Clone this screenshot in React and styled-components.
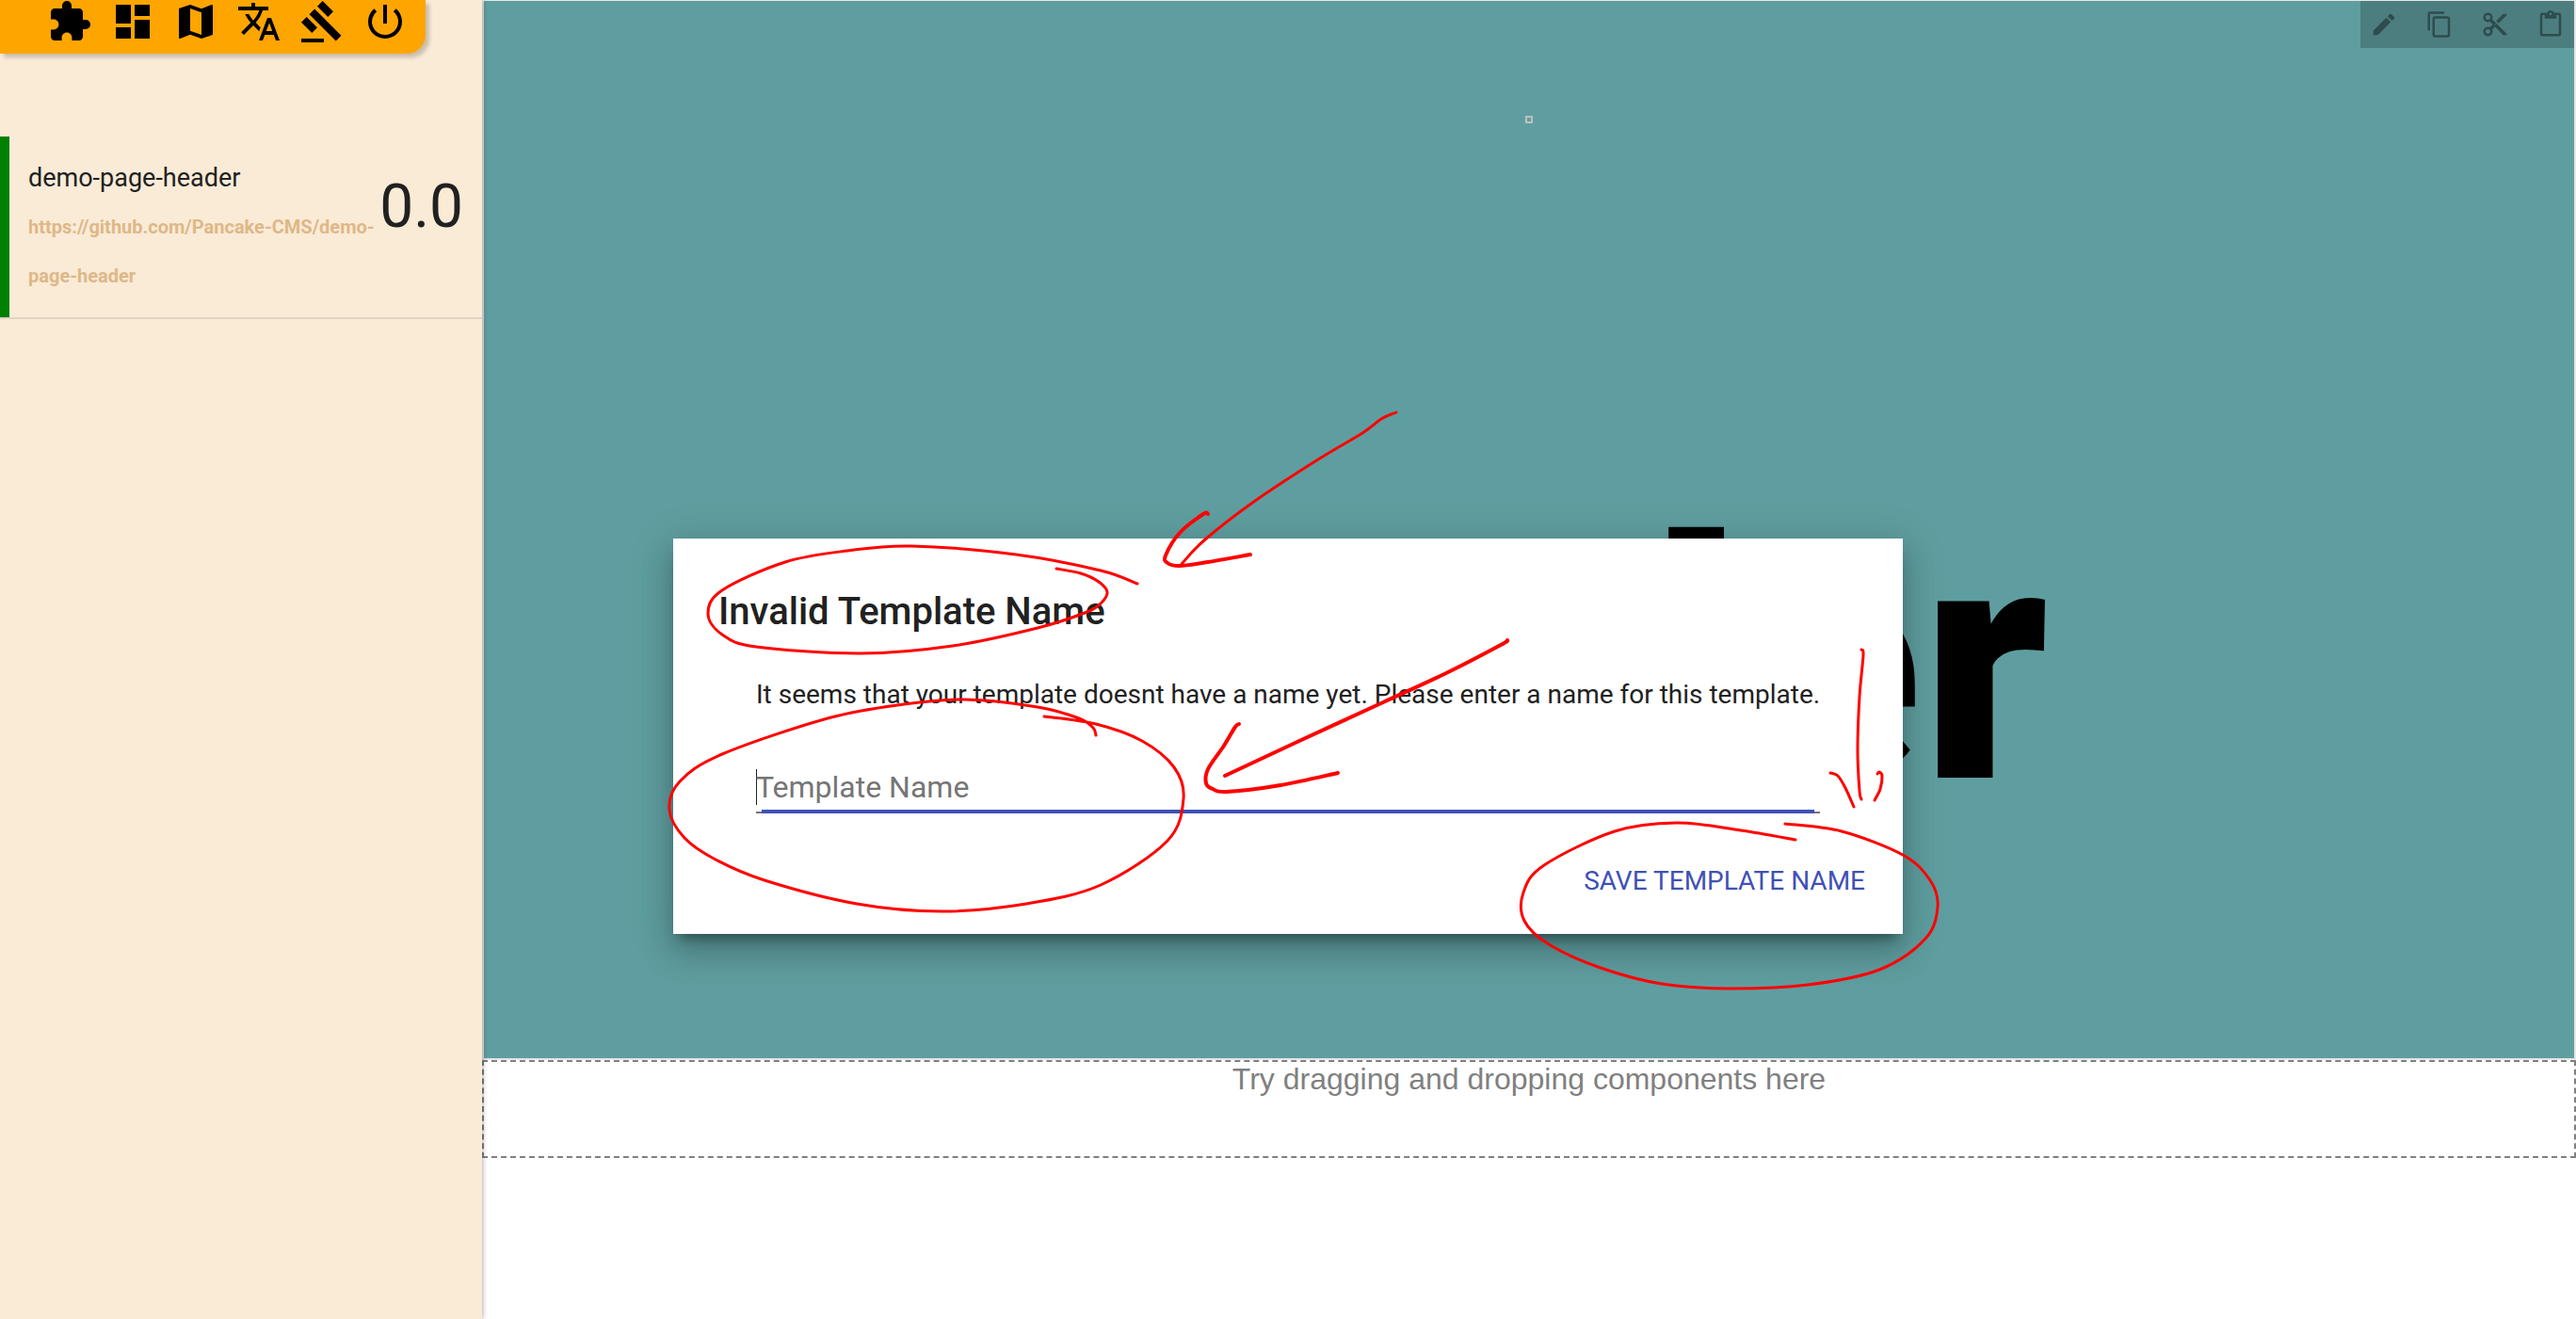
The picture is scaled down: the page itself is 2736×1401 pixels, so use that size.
import React from "react";
import styled, { createGlobalStyle } from "styled-components";
import {
  MdContentCopy,
  MdContentCut,
  MdContentPaste,
  MdDashboard,
  MdEdit,
  MdExtension,
  MdGavel,
  MdMap,
  MdPowerSettingsNew,
  MdTranslate,
} from "react-icons/md";

const GlobalStyle = createGlobalStyle`
  *, *::before, *::after { box-sizing: border-box; }
  body {
    margin: 0;
    background: #fff;
    color: #212121;
    font-family: Roboto, "Liberation Sans", sans-serif;
  }
`;

const Shell = styled.div`
  position: relative;
  display: flex;
  min-height: 100vh;
  overflow: hidden;
`;

const Sidebar = styled.aside`
  position: relative;
  z-index: 1;
  flex: 0 0 512px;
  display: flex;
  flex-direction: column;
  align-items: stretch;
  gap: 88px;
  background: #faebd7;
  box-shadow: 0 0 6px rgba(0, 0, 0, 0.4);
`;

const Nav = styled.nav`
  align-self: flex-start;
  display: flex;
  align-items: flex-end;
  gap: 19px;
  height: 57px;
  padding: 0 19px 10px 50px;
  background: #ffa500;
  border-bottom-right-radius: 20px;
  box-shadow: 4px 4px 4px rgba(0, 0, 0, 0.2);
`;

const IconButton = styled.button`
  display: block;
  padding: 0;
  border: 0;
  background: none;
  color: ${(p) => p.$color};
  font-size: ${(p) => p.$size}px;
  line-height: 0;
  cursor: pointer;
`;

const ComponentList = styled.ul`
  margin: 0;
  padding: 0;
  list-style: none;
`;

const ComponentItem = styled.li`
  display: flex;
  align-items: flex-start;
  justify-content: space-between;
  position: relative;
  padding: 18px 20px 18px 30px;
  border-bottom: 2px solid #e1d4c2;
  background: linear-gradient(#008000, #008000) 0 0 / 10px 100% no-repeat;
`;

const ComponentInfo = styled.div`
  flex: 1;
  min-width: 0;
  line-height: 52px;
`;

const ComponentName = styled.div`
  font-size: 27px;
`;

const ComponentLink = styled.a`
  display: block;
  color: #deb887;
  font-size: 20px;
  font-weight: 700;
  text-decoration: none;
`;

const Version = styled.div`
  font-size: 64px;
  line-height: 114px;
`;

const Canvas = styled.main`
  flex: 1;
  min-width: 0;
`;

const Hero = styled.section`
  display: flex;
  flex-direction: column;
  align-items: center;
  position: relative;
  height: 1126px;
  padding-top: 122px;
  border: solid #e6e6e6;
  border-width: 1px 2px 2px;
  background: #5f9ea0;
  overflow: hidden;
`;

const EditBar = styled.div`
  position: absolute;
  top: 0;
  right: 0;
  display: flex;
  gap: 29px;
  padding: 10px;
  background: rgba(0, 0, 0, 0.2);
`;

const EmptySlot = styled.div`
  width: 8px;
  height: 8px;
  border: 2px solid #c0c0c0;
`;

const HeroTitle = styled.h1`
  margin: 334px 56px 0 0;
  color: #000;
  font-size: 355px;
  font-weight: 900;
  line-height: 480px;
  white-space: nowrap;
`;

const DropZone = styled.section`
  height: 104px;
  border: 2px dashed #808080;
  color: #808080;
  font-family: "Liberation Sans", Arial, sans-serif;
  font-size: 32px;
  text-align: center;
`;

const Overlay = styled.div`
  position: absolute;
  inset: 0;
  z-index: 2;
  display: flex;
  align-items: flex-start;
  justify-content: center;
  padding-top: 572px;
`;

const Dialog = styled.form`
  position: relative;
  display: flex;
  flex-direction: column;
  width: 1306px;
  max-width: 100%;
  padding: 50px 40px 20px 48px;
  background: #fff;
  box-shadow: 0 21px 32px 3px rgba(0, 0, 0, 0.14),
    0 8px 40px 7px rgba(0, 0, 0, 0.12), 0 11px 13px -7px rgba(0, 0, 0, 0.4);
`;

const DialogTitle = styled.h2`
  margin: 0;
  font-size: 40px;
  font-weight: 500;
  line-height: 56px;
`;

const DialogBody = styled.div`
  display: flex;
  flex-direction: column;
  gap: 54px;
  padding: 40px 48px 0 40px;
`;

const DialogText = styled.label`
  font-size: 28px;
  line-height: 40px;
  white-space: nowrap;
`;

const NameField = styled.div`
  height: 52px;
  background: linear-gradient(#757575, #757575) 0 100% / 100% 2px no-repeat;
`;

const NameInput = styled.input`
  display: block;
  width: 100%;
  height: 52px;
  padding: 0 0 4px;
  border: 0;
  outline: 0;
  background: linear-gradient(#212121, #212121) 0 5px / 1px 38px no-repeat,
    linear-gradient(#3f51b5, #3f51b5) 50% 100% / calc(100% - 12px) 4px no-repeat;
  color: #212121;
  font-family: inherit;
  font-size: 32px;
  &::placeholder {
    color: #757575;
    opacity: 1;
  }
`;

const SaveButton = styled.button`
  align-self: flex-end;
  margin-top: 36px;
  padding: 0;
  border: 0;
  background: none;
  color: #3f51b5;
  font-family: inherit;
  font-size: 28px;
  line-height: 72px;
  text-transform: uppercase;
  cursor: pointer;
`;

const Markup = styled.svg`
  position: absolute;
  inset: 0;
  width: 100%;
  height: 100%;
  overflow: visible;
  pointer-events: none;
`;

const NAV = [
  ["Components", MdExtension],
  ["Dashboard", MdDashboard],
  ["Site map", MdMap],
  ["Translate", MdTranslate],
  ["Rules", MdGavel],
  ["Log out", MdPowerSettingsNew],
];

const EDIT = [
  ["Edit", MdEdit],
  ["Copy", MdContentCopy],
  ["Cut", MdContentCut],
  ["Paste", MdContentPaste],
];

const STROKES = [
  { width: 3, points: [[1122, 604], [1148, 609], [1167, 618], [1176, 629], [1169, 641], [1152, 651], [1102, 667], [1012, 686], [914, 694], [803, 687], [767, 674], [752, 652], [767, 627], [834, 597], [900, 585], [968, 580], [1079, 589], [1169, 606], [1208, 620]] },
  { width: 3, points: [[1109, 761], [1164, 769], [1213, 787], [1247, 815], [1257, 848], [1240, 893], [1169, 940], [1090, 960], [1000, 968], [910, 960], [812, 935], [760, 913], [727, 890], [711, 860], [722, 830], [767, 801], [879, 763], [960, 748], [1025, 743], [1102, 751], [1146, 763], [1161, 773], [1164, 781]] },
  { width: 3, points: [[1483, 438], [1467, 445], [1447, 460], [1400, 488], [1333, 532], [1280, 573], [1255, 599]] },
  { width: 4, points: [[1283, 546], [1278, 546], [1253, 566], [1238, 590], [1240, 598], [1253, 601], [1283, 597], [1328, 589]] },
  { width: 4, points: [[1601, 680], [1594, 685], [1536, 715], [1469, 746], [1380, 787], [1301, 824]] },
  { width: 4, points: [[1316, 769], [1312, 772], [1300, 792], [1283, 817], [1281, 832], [1288, 838], [1303, 841], [1360, 834], [1421, 821]] },
  { width: 3, points: [[1977, 690], [1979, 696], [1975, 740], [1973, 797], [1975, 840], [1977, 849]] },
  { width: 3, points: [[1944, 821], [1952, 824], [1960, 837], [1969, 857]] },
  { width: 3, points: [[1994, 822], [1996, 820], [1999, 824], [1997, 838], [1991, 850]] },
  { width: 3, points: [[1896, 875], [1956, 883], [2021, 908], [2050, 935], [2058, 963], [2045, 997], [1996, 1030], [1920, 1046], [1835, 1050], [1765, 1045], [1700, 1028], [1645, 1003], [1619, 978], [1618, 948], [1640, 919], [1715, 883], [1782, 874], [1849, 882], [1907, 892]] },
];

/* Turns a list of pen positions into one smooth curve. */
function smooth(points) {
  let d = `M${points[0].join(" ")}`;
  for (let i = 0; i < points.length - 1; i += 1) {
    const a = points[i - 1] || points[i];
    const b = points[i];
    const c = points[i + 1];
    const e = points[i + 2] || c;
    d += ` C${b[0] + (c[0] - a[0]) / 6} ${b[1] + (c[1] - a[1]) / 6}`;
    d += ` ${c[0] - (e[0] - b[0]) / 6} ${c[1] - (e[1] - b[1]) / 6} ${c.join(" ")}`;
  }
  return d;
}

export default function App() {
  return (
    <>
      <GlobalStyle />
      <Shell>
        <Sidebar>
          <Nav>
            {NAV.map(([label, Icon]) => (
              <IconButton key={label} type="button" aria-label={label} $size={48} $color="#000">
                <Icon />
              </IconButton>
            ))}
          </Nav>
          <ComponentList>
            <ComponentItem>
              <ComponentInfo>
                <ComponentName>demo-page-header</ComponentName>
                <ComponentLink href="https://github.com/Pancake-CMS/demo-page-header">
                  https://github.com/Pancake-CMS/demo-page-header
                </ComponentLink>
              </ComponentInfo>
              <Version>0.0</Version>
            </ComponentItem>
          </ComponentList>
        </Sidebar>
        <Canvas>
          <Hero>
            <EditBar>
              {EDIT.map(([label, Icon]) => (
                <IconButton key={label} type="button" aria-label={label} $size={30} $color="#2e4c4d">
                  <Icon />
                </IconButton>
              ))}
            </EditBar>
            <EmptySlot />
            <HeroTitle>Header</HeroTitle>
          </Hero>
          <DropZone>Try dragging and dropping components here</DropZone>
        </Canvas>
        <Overlay>
          <Dialog role="dialog" aria-labelledby="dialog-title">
            <DialogTitle id="dialog-title">Invalid Template Name</DialogTitle>
            <DialogBody>
              <DialogText htmlFor="template-name">
                It seems that your template doesnt have a name yet. Please enter a name for this template.
              </DialogText>
              <NameField>
                <NameInput id="template-name" type="text" placeholder="Template Name" />
              </NameField>
            </DialogBody>
            <SaveButton type="button">Save Template Name</SaveButton>
            <Markup viewBox="0 0 1306 420" aria-hidden="true">
              <g transform="translate(-715 -572)" fill="none" stroke="#f00" strokeLinecap="round" strokeLinejoin="round">
                {STROKES.map((s, i) => (
                  <path key={i} d={smooth(s.points)} strokeWidth={s.width} />
                ))}
              </g>
            </Markup>
          </Dialog>
        </Overlay>
      </Shell>
    </>
  );
}
